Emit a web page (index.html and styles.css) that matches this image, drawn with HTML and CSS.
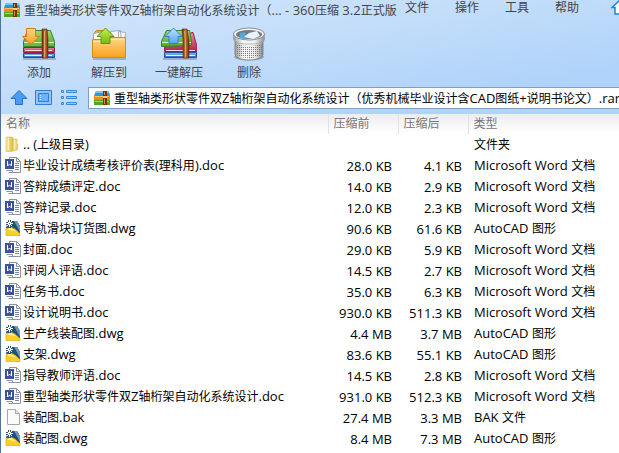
FILE: index.html
```
<!DOCTYPE html>
<html lang="zh-CN">
<head>
    <meta charset="UTF-8">
    <meta name="viewport" content="width=device-width, initial-scale=1.0">
    <title>360压缩</title>
    <link rel="stylesheet" href="styles.css">
</head>
<body>
    <!-- shared icons -->
    <svg class="sprite" aria-hidden="true">
        <defs>
            <linearGradient id="green" x2="0" y2="1"><stop offset="0" stop-color="#a5d96c"/><stop offset="1" stop-color="#4fa833"/></linearGradient>
            <linearGradient id="red" x2="0" y2="1"><stop offset="0" stop-color="#f08aa2"/><stop offset="1" stop-color="#b3224c"/></linearGradient>
            <linearGradient id="blue" x2="0" y2="1"><stop offset="0" stop-color="#8cc0f8"/><stop offset="1" stop-color="#2c63bd"/></linearGradient>
            <linearGradient id="strap"><stop offset="0" stop-color="#6e2c0e"/><stop offset=".5" stop-color="#c8793c"/><stop offset="1" stop-color="#6e2c0e"/></linearGradient>
            <linearGradient id="orange" x2="0" y2="1"><stop offset="0" stop-color="#ffd98a"/><stop offset="1" stop-color="#f9a01c"/></linearGradient>
            <linearGradient id="lime" x2="0" y2="1"><stop offset="0" stop-color="#c8ee50"/><stop offset="1" stop-color="#74bb10"/></linearGradient>
            <linearGradient id="sky" x2="0" y2="1"><stop offset="0" stop-color="#b8e4ff"/><stop offset="1" stop-color="#55a8f5"/></linearGradient>
            <linearGradient id="metal"><stop offset="0" stop-color="#9a9a9a"/><stop offset=".3" stop-color="#f8f8f8"/><stop offset=".7" stop-color="#eee"/><stop offset="1" stop-color="#8c8c8c"/></linearGradient>
            <linearGradient id="gold"><stop offset="0" stop-color="#f7e8a0"/><stop offset="1" stop-color="#e3bd45"/></linearGradient>
            <pattern id="holes" width="2" height="2" patternUnits="userSpaceOnUse"><path fill="#777" d="M0 0h1v1H0z"/></pattern>
        </defs>
        <symbol id="logo" viewBox="0 0 16 14">
            <path fill="#2497e6" d="M2 0h13l1 5H0z"/>
            <path fill="#6ec6fa" d="M2 0h13v2H2z"/>
            <path fill="#f18a1c" d="M0 5h16v4H0z"/>
            <path fill="#ffc45a" d="M1 5h14v1H1z"/>
            <path fill="#55a51c" d="M0 9h16v5H0z"/>
            <path fill="#a6de50" d="M1 10h14v1H1z"/>
            <path fill="#76310d" d="M9 0h4v14H9z"/>
            <path fill="#d88c47" d="M10 1h1v3h-1zM10 8h1v5h-1z"/>
            <path fill="#f4d284" d="M9 5h4v2H9z"/>
        </symbol>
        <symbol id="books" viewBox="0 0 36 34">
            <path fill="#000" opacity=".2" d="M2 31h33v2H2z"/>
            <path fill="url(#blue)" stroke="#234f9b" d="M2.500 26.500h31v4h-31z"/>
            <path fill="#eaf3ff" d="M4 28h27v1H4z"/>
            <path fill="url(#red)" stroke="#9c1d42" d="M2.500 20.500h31v5h-31z"/>
            <path fill="#ffe2e9" d="M4 23h27v1H4z"/>
            <path fill="url(#green)" stroke="#35812a" d="M6.500 3.500h23l4 11v5h-31v-5z"/>
            <path fill="#d8f2bb" d="M3 15h30v1H3z"/>
            <path fill="#6db94b" d="M3 16h30v3H3z"/>
            <path fill="url(#strap)" stroke="#5e250b" stroke-width=".6" d="M21 2h5l1 11v18h-6z"/>
            <path fill="#e2a066" d="M23 4h1v26h-1z"/>
        </symbol>
        <symbol id="word" viewBox="0 0 16 16">
            <path fill="#fff" stroke="#8a93a3" d="M4.500.5h7l4 4v11h-9"/>
            <path fill="none" stroke="#8a93a3" d="M11.500.5v4h4M4.500 0v3M1.500 13.500h6v2h-4"/>
            <path stroke="#7887a5" d="M10 6.500h4M10 8.500h4M10 10.500h4M10 12.500h4"/>
            <path fill="#3c539c" d="M0 2h9v10H0z"/>
            <path fill="none" stroke="#fff" d="M2.500 4v5l2-2 2 2V4"/>
        </symbol>
        <symbol id="dwg" viewBox="0 0 16 16">
            <path fill="#1d4f77" d="M3 1h9l3 5v8L1 8z"/>
            <path fill="#6f97b3" d="M9 1h3l3 5v6z"/>
            <path fill="#f7cf26" stroke="#d6a10e" stroke-width=".6" d="M1 9 5 6.500 10 9l5 4.500V15.500H1z"/>
            <path fill="#fff0a0" d="m2 9.500 3-2 7 4z"/>
            <path stroke="#26567c" stroke-width="3" d="M4.500 0v8M1 3.500h7"/>
            <path stroke="#fff" d="M4.500 0v7M1 3.500h7M2 1l5 5M7 1 2 6"/>
            <path fill="#26567c" d="M4 3h1v1H4z"/>
        </symbol>
        <symbol id="folder" viewBox="0 0 16 16">
            <path fill="url(#gold)" stroke="#d9bb5c" stroke-width=".6" d="M1 1h6l1 1v13l-1 .5H1z"/>
            <path fill="#f3dc83" stroke="#d9b64b" stroke-width=".6" d="M8 3h4v11l-4 1z"/>
            <path fill="#fff5c7" d="M3 2h1v12H3zM9 4h1v9H9z"/>
            <path fill="#e8c860" d="M12 8h1v6h-1z"/>
        </symbol>
        <symbol id="blank" viewBox="0 0 16 16">
            <path fill="#fbfbfb" stroke="#a6a6a6" d="M2.500.5h8l4 4v11h-12z"/>
            <path fill="#e5e5e5" stroke="#a6a6a6" d="M10.500.5v4h4"/>
        </symbol>
    </svg>

    <div class="window">
        <header class="chrome">
            <div class="titlebar">
                <svg class="logo"><use href="#logo"/></svg>
                <h1 class="title">重型轴类形状零件双<span class="en">Z</span>轴桁架自动化系统设计（<span class="en">... - 360</span>压缩<span class="en"> 3.2</span>正式版</h1>
                <nav class="menu">
                    <button type="button">文件</button>
                    <button type="button">操作</button>
                    <button type="button">工具</button>
                    <button type="button">帮助</button>
                </nav>
                <button type="button" class="skin" aria-label="换肤">
                    <svg viewBox="0 0 16 16"><path fill="#fff" stroke="#2084d2" stroke-width="1.500" d="M8 1 15 7.500h-3V14H4V7.500H1z"/></svg>
                </button>
            </div>

            <div class="toolbar">
                <button type="button" class="tool">
                    <svg viewBox="0 0 36 34">
                        <use href="#books"/>
                        <path fill="url(#orange)" stroke="#d47d10" d="M5.500 1.500h9v8h4L10 17.500 1.500 9.500h4z"/>
                    </svg>
                    <span>添加</span>
                </button>
                <button type="button" class="tool">
                    <svg viewBox="0 0 36 34">
                        <path fill="#000" opacity=".2" d="M2 31h33v2H2z"/>
                        <path fill="#eda52f" stroke="#c98413" d="M3.500 30V5.500l2-2h8l3 3h17V30z"/>
                        <path fill="#fff" stroke="#a9a9a9" d="m2.500 6.500 15-3v14h-15zM19.500 4.500l10-1 1 12h-10zM27.500 4.500l7 1-1 12h-6z"/>
                        <path fill="url(#orange)" stroke="#d98c15" d="M1.500 12.500h14l3-2h16v20h-33z"/>
                        <path fill="none" stroke="#ffe3a6" d="M3 14.500h13l3-2h14"/>
                        <path fill="url(#lime)" stroke="#5a9a0c" d="M14.500 1 23 9.500h-4v7h-9v-7H6z"/>
                    </svg>
                    <span>解压到</span>
                </button>
                <button type="button" class="tool">
                    <svg viewBox="0 0 36 34">
                        <path fill="#000" opacity=".2" d="M2 31h34v2H2z"/>
                        <path fill="url(#blue)" stroke="#234f9b" d="M3.500 25.500h32v5h-32z"/>
                        <path fill="#eaf3ff" d="M5 28h29v1H5z"/>
                        <path fill="url(#red)" stroke="#9c1d42" d="M3.500 20.500 31 5.500h1l4 14v5H3.500z"/>
                        <path fill="#ffe2e9" d="M5 23h29v1H5z"/>
                        <path fill="url(#green)" stroke="#35812a" d="M5.500 3.500h23l2 11v4l-30 1v-5z"/>
                        <path fill="#d8f2bb" d="M1 15h29v1H1z"/>
                        <path fill="url(#strap)" stroke="#5e250b" stroke-width=".6" d="M21 2h5l2 11v18h-6V13z"/>
                        <path fill="#e2a066" d="M23 4h1l1 10v16h-1V14z"/>
                        <path fill="url(#sky)" stroke="#2f7fd6" d="M12.500 1 21 9.500h-4v7H8v-7H4z"/>
                    </svg>
                    <span>一键解压</span>
                </button>
                <button type="button" class="tool">
                    <svg viewBox="0 0 36 34">
                        <ellipse cx="18" cy="30" rx="15" ry="3.500" opacity=".25"/>
                        <path fill="url(#metal)" stroke="#777" stroke-width=".8" d="M4 9v19q3 5 14 5t14-5V9z"/>
                        <path fill="url(#holes)" d="M5 17q13 4 26 0v11q-13 6-26 0z"/>
                        <path fill="url(#metal)" stroke="#999" stroke-width=".6" d="M2.500 7v6Q5 17 18 17t15.500-4V7z"/>
                        <ellipse cx="18" cy="7" rx="15.500" ry="6" fill="#f7f7f7" stroke="#8d8d8d"/>
                        <ellipse cx="18" cy="7.500" rx="13" ry="4.500" fill="#757b80"/>
                        <circle cx="12" cy="8.500" r="3.200" fill="#4fa9dd"/>
                        <path fill="#e6f4fb" d="m13 10 5-4 8-2 3 5-7 3z"/>
                    </svg>
                    <span>删除</span>
                </button>
            </div>

            <div class="pathbar">
                <button type="button" class="nav" aria-label="向上">
                    <svg viewBox="0 0 18 18"><path fill="#4a9cf2" stroke="#2474cf" d="M9 1.500 17 9.500h-4.500v6h-7v-6H1z"/></svg>
                </button>
                <button type="button" class="nav" aria-label="预览">
                    <svg viewBox="0 0 18 18"><path fill="#8dc4fa" stroke="#2c80dc" d="M.5 1.500h16v14H.5z"/><path fill="#6db2f6" stroke="#2c80dc" d="M3.500 4.500h10v8h-10z"/><path fill="#e0f0ff" d="M5 6h1v1H5zM5 8h1v1H5zM5 10h1v1H5z"/></svg>
                </button>
                <button type="button" class="nav" aria-label="列表">
                    <svg viewBox="0 0 18 18"><path fill="#9bcbfa" stroke="#3688de" d="M1.500 1.500h2v2h-2zM6.500 1.500h10v2h-10zM1.500 7.500h2v2h-2zM6.500 7.500h10v2h-10zM1.500 13.500h2v2h-2zM6.500 13.500h10v2h-10z"/></svg>
                </button>
                <div class="address">
                    <svg class="logo"><use href="#logo"/></svg>
                    <span>重型轴类形状零件双<span class="en">Z</span>轴桁架自动化系统设计（优秀机械毕业设计含<span class="en">CAD</span>图纸<span class="en">+</span>说明书论文）<span class="en">.rar</span></span>
                </div>
            </div>
        </header>

        <table class="files">
            <thead>
                <tr>
                    <th class="col-name">名称</th>
                    <th class="col-size">压缩前</th>
                    <th class="col-size">压缩后</th>
                    <th>类型</th>
                </tr>
            </thead>
            <tbody>
                <tr><td><svg><use href="#folder"/></svg><span class="en">.. (</span>上级目录<span class="en">)</span></td><td></td><td></td><td>文件夹</td></tr>
                <tr><td><svg><use href="#word"/></svg>毕业设计成绩考核评价表<span class="en">(</span>理科用<span class="en">).doc</span></td><td class="size">28.0 KB</td><td class="size">4.1 KB</td><td><span class="en">Microsoft Word </span>文档</td></tr>
                <tr><td><svg><use href="#word"/></svg>答辩成绩评定<span class="en">.doc</span></td><td class="size">14.0 KB</td><td class="size">2.9 KB</td><td><span class="en">Microsoft Word </span>文档</td></tr>
                <tr><td><svg><use href="#word"/></svg>答辩记录<span class="en">.doc</span></td><td class="size">12.0 KB</td><td class="size">2.3 KB</td><td><span class="en">Microsoft Word </span>文档</td></tr>
                <tr><td><svg><use href="#dwg"/></svg>导轨滑块订货图<span class="en">.dwg</span></td><td class="size">90.6 KB</td><td class="size">61.6 KB</td><td><span class="en">AutoCAD </span>图形</td></tr>
                <tr><td><svg><use href="#word"/></svg>封面<span class="en">.doc</span></td><td class="size">29.0 KB</td><td class="size">5.9 KB</td><td><span class="en">Microsoft Word </span>文档</td></tr>
                <tr><td><svg><use href="#word"/></svg>评阅人评语<span class="en">.doc</span></td><td class="size">14.5 KB</td><td class="size">2.7 KB</td><td><span class="en">Microsoft Word </span>文档</td></tr>
                <tr><td><svg><use href="#word"/></svg>任务书<span class="en">.doc</span></td><td class="size">35.0 KB</td><td class="size">6.3 KB</td><td><span class="en">Microsoft Word </span>文档</td></tr>
                <tr><td><svg><use href="#word"/></svg>设计说明书<span class="en">.doc</span></td><td class="size">930.0 KB</td><td class="size">511.3 KB</td><td><span class="en">Microsoft Word </span>文档</td></tr>
                <tr><td><svg><use href="#dwg"/></svg>生产线装配图<span class="en">.dwg</span></td><td class="size">4.4 MB</td><td class="size">3.7 MB</td><td><span class="en">AutoCAD </span>图形</td></tr>
                <tr><td><svg><use href="#dwg"/></svg>支架<span class="en">.dwg</span></td><td class="size">83.6 KB</td><td class="size">55.1 KB</td><td><span class="en">AutoCAD </span>图形</td></tr>
                <tr><td><svg><use href="#word"/></svg>指导教师评语<span class="en">.doc</span></td><td class="size">14.5 KB</td><td class="size">2.8 KB</td><td><span class="en">Microsoft Word </span>文档</td></tr>
                <tr><td><svg><use href="#word"/></svg>重型轴类形状零件双<span class="en">Z</span>轴桁架自动化系统设计<span class="en">.doc</span></td><td class="size">931.0 KB</td><td class="size">512.3 KB</td><td><span class="en">Microsoft Word </span>文档</td></tr>
                <tr><td><svg><use href="#blank"/></svg>装配图<span class="en">.bak</span></td><td class="size">27.4 MB</td><td class="size">3.3 MB</td><td><span class="en">BAK </span>文件</td></tr>
                <tr><td><svg><use href="#dwg"/></svg>装配图<span class="en">.dwg</span></td><td class="size">8.4 MB</td><td class="size">7.3 MB</td><td><span class="en">AutoCAD </span>图形</td></tr>
            </tbody>
        </table>
    </div>
</body>
</html>
```

FILE: styles.css
```
* {
    box-sizing: border-box;
}

body {
    margin: 0;
    font-family: "Open Sans", "Noto Sans CJK SC", sans-serif;
    font-size: 12px;
    line-height: 20px;
    color: #000;
    background: #fff;
    overflow: hidden;
}

button {
    padding: 0;
    border: none;
    background: none;
    font: inherit;
    color: inherit;
    cursor: pointer;
}

svg {
    display: block;
    flex: none;
}

.sprite {
    position: absolute;
    width: 0;
    height: 0;
}

.en {
    font-size: 13px;
}

.window {
    min-height: 100vh;
    border-left: 1px solid #4f7199;
}

.chrome {
    background: linear-gradient(170deg, #d3e6fb 0%, #c1dcfa 45%, #afd3fa 80%);
    color: #444;
    white-space: nowrap;
}

.titlebar {
    display: flex;
    height: 24px;
    padding-left: 3px;
}

.logo {
    width: 16px;
    height: 14px;
}

.titlebar .logo {
    margin-top: 3px;
}

.title {
    flex: none;
    width: 377px;
    margin: 0 4px;
    font-size: 12px;
    font-weight: normal;
}

.menu {
    display: flex;
    flex: none;
    gap: 26px;
    height: 16px;
    line-height: 16px;
}

.skin {
    flex: none;
    height: 16px;
    margin-left: 32px;
}

.skin svg {
    width: 16px;
    height: 16px;
}

.toolbar {
    display: flex;
    padding-left: 3px;
}

.tool {
    display: flex;
    flex-direction: column;
    align-items: center;
    width: 70px;
    height: 60px;
    padding-top: 3px;
}

.tool svg {
    width: 36px;
    height: 34px;
    margin-bottom: 2px;
}

.pathbar {
    display: flex;
    align-items: center;
    gap: 7px;
    height: 30px;
    padding: 0 0 2px 9px;
}

.nav svg {
    width: 18px;
    height: 18px;
}

.address {
    display: flex;
    flex: 1;
    align-items: center;
    gap: 4px;
    min-width: 0;
    height: 22px;
    margin-left: 3px;
    padding-left: 5px;
    border: 1px solid #7f9fc4;
    border-right: none;
    background: #fff;
    color: #000;
    overflow: hidden;
}

.files {
    width: 100%;
    table-layout: fixed;
    border-collapse: collapse;
    white-space: nowrap;
}

.files th {
    height: 20px;
    padding: 0 0 0 5px;
    background: linear-gradient(#ececec, #fff);
    border-right: 1px solid #e2e2e2;
    color: #777;
    font-weight: normal;
    text-align: left;
}

.files th:last-child {
    border-right: none;
}

.col-name {
    width: 327px;
}

.col-size {
    width: 70px;
}

.files td {
    height: 21px;
    padding: 0 0 0 6px;
}

.files td svg {
    float: left;
    width: 16px;
    height: 16px;
    margin: 2px 2px 0 0;
}

.files td:first-child {
    padding-left: 4px;
}

.files .size {
    padding: 0 6px 0 0;
    font-size: 13px;
    text-align: right;
}
```
